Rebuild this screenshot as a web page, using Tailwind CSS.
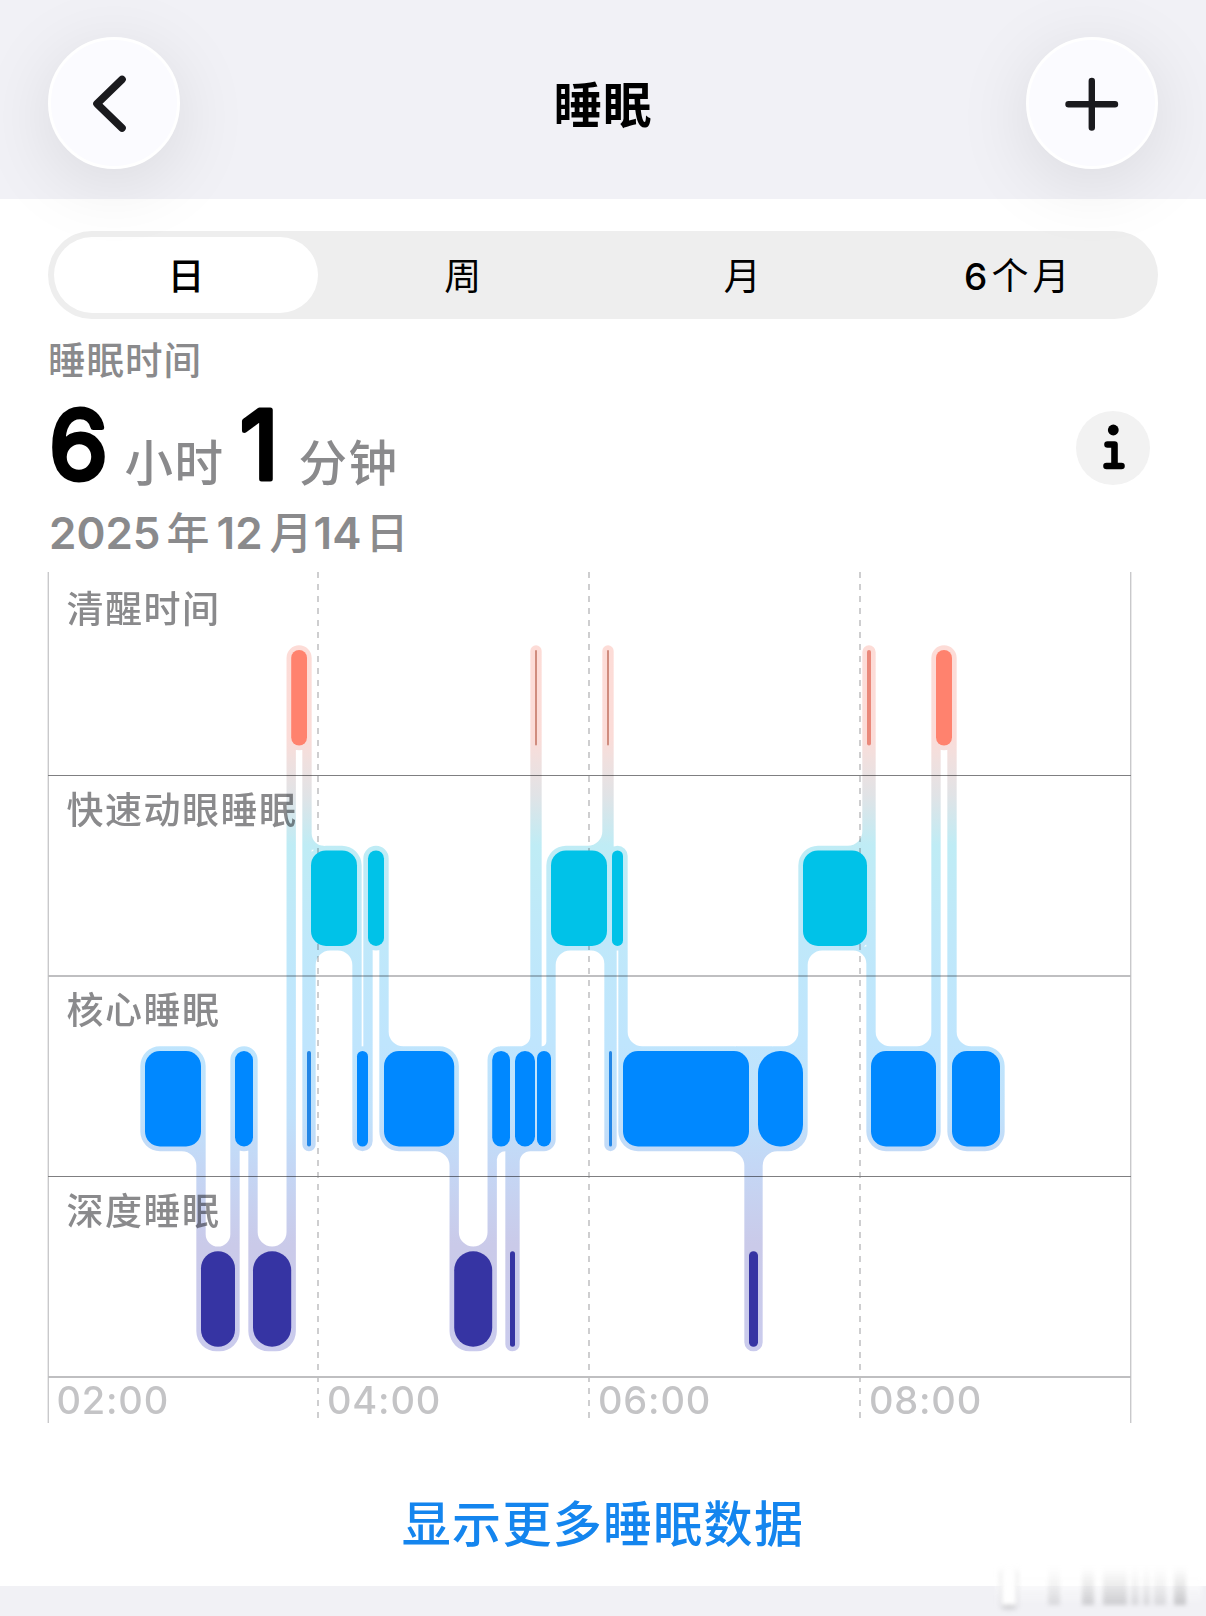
<!doctype html>
<html lang="zh-CN">
  <head>
    <meta charset="UTF-8" />
    <meta name="viewport" content="width=device-width, initial-scale=1.0" />
    <title>睡眠</title>
    <script src="https://cdn.jsdelivr.net/npm/@tailwindcss/browser@4"></script>
  </head>

  <body class="bg-white font-['Inter','Noto_Sans_CJK_SC',sans-serif] text-black">
    <div class="w-[1206px] h-[1616px] flex flex-col overflow-hidden">

      <!-- nav bar -->
      <header class="relative z-10 h-[199px] flex-none bg-[#f1f1f6] px-12 pt-[37px] flex justify-between">
        <button class="size-[132px] rounded-full bg-[#fbfbff] border-3 border-white shadow-[0_14px_76px_rgba(0,0,0,0.1)] flex items-center justify-center" aria-label="返回">
          <svg class="size-[126px]" viewBox="0 0 126 126" fill="none" stroke="#1a1a1e" stroke-width="7.6" stroke-linecap="round" stroke-linejoin="round">
            <path d="M71 39.5 L46 63.7 L71 88" />
          </svg>
        </button>
        <h1 class="h-[132px] pt-1.5 flex items-center text-[48.5px] tracking-[1px] font-bold">睡眠</h1>
        <button class="size-[132px] rounded-full bg-[#fbfbff] border-3 border-white shadow-[0_14px_76px_rgba(0,0,0,0.1)] flex items-center justify-center" aria-label="添加">
          <svg class="size-[126px]" viewBox="0 0 126 126" fill="none" stroke="#1a1a1e" stroke-width="6.4" stroke-linecap="round">
            <path d="M39.5 64.3 H86 M62.8 41 V87.6" />
          </svg>
        </button>
      </header>

      <!-- range picker -->
      <nav class="mx-12 mt-8 h-[88px] flex-none rounded-full bg-[#eeeeee] px-1.5 py-1.5 grid grid-cols-4 text-[37px] text-center">
        <div class="w-[264px] pt-1 rounded-full bg-white flex items-center justify-center font-medium">日</div>
        <div class="pt-1 pr-1.5 flex items-center justify-center">周</div>
        <div class="pt-1 pl-1 flex items-center justify-center">月</div>
        <div class="pt-1 pl-2 flex items-center justify-center tracking-[4px]"><span class="font-medium">6</span>个月</div>
      </nav>

      <!-- summary -->
      <section class="h-[253px] flex-none pl-12 pr-[56px] flex justify-between text-[#8a8a8c] font-medium">
        <div>
          <div class="pt-1 h-[78px] leading-[76px] text-[37.5px] tracking-[1px]">睡眠时间</div>
          <div class="h-[96px] flex items-baseline leading-[96px]">
            <svg class="w-[76.5px] h-[84px] overflow-visible" viewBox="0 0 76.5 84">
              <text x="1" y="81.5" class="text-[95px] font-normal fill-black stroke-black stroke-[5px] [stroke-linejoin:round]">6</text>
            </svg>
            <span class="text-[48.5px] tracking-[1.5px]">小时</span>
            <svg class="w-[74px] h-[84px] overflow-visible" viewBox="0 0 74 84">
              <text x="15" y="81.5" class="text-[95px] font-normal fill-black stroke-black stroke-[5px] [stroke-linejoin:round]">1</text>
            </svg>
            <span class="text-[48.5px] tracking-[1.5px]">分钟</span>
          </div>
          <div class="flex items-baseline pt-[2px] leading-[76px] text-[43px]">
            <span class="ml-[1px] text-[44px] font-semibold">2025</span><span class="ml-[6px]">年</span><span class="ml-[7px] text-[44px] font-semibold">12</span><span class="ml-[7px]">月</span><span class="ml-[1px] text-[44px] font-semibold">14</span><span class="ml-[4px]">日</span>
          </div>
        </div>
        <button class="mt-[92px] size-[74px] rounded-full bg-[#f2f2f2]" aria-label="信息">
          <svg class="size-[74px]" viewBox="0 0 74 74" fill="none" stroke="#000" stroke-width="6.6" stroke-linecap="round" stroke-linejoin="round">
            <circle cx="37.3" cy="19" r="5.4" fill="#000" stroke="none" />
            <path d="M31.5 33.5 H38.5 V55 M30.5 55 H45.5" />
          </svg>
        </button>
      </section>

      <!-- stages chart -->
      <svg class="w-[1206px] h-[852px] flex-none isolate" viewBox="0 572 1206 852">
        <defs>
          <linearGradient id="halo" gradientUnits="userSpaceOnUse" x1="0" y1="640" x2="0" y2="1360">
            <stop offset="0" stop-color="#fddcd7" />
            <stop offset="0.135" stop-color="#fbdcd8" />
            <stop offset="0.17" stop-color="#efe0df" />
            <stop offset="0.215" stop-color="#e1e3e6" />
            <stop offset="0.285" stop-color="#bfecf5" />
            <stop offset="0.42" stop-color="#bfe8fa" />
            <stop offset="0.56" stop-color="#bfe5fd" />
            <stop offset="0.66" stop-color="#c0e1fb" />
            <stop offset="0.73" stop-color="#c4d7f5" />
            <stop offset="0.84" stop-color="#cacae9" />
            <stop offset="1" stop-color="#cacbed" />
          </linearGradient>
        </defs>

        <g stroke="#c9c9cb" stroke-width="1.4">
          <path d="M48.3 572 V1423 M1130.7 572 V1423" />
          <path d="M318 572 V1423 M589 572 V1423 M860 572 V1423" stroke-width="1.8" stroke-dasharray="6 6" />
        </g>
        <g shape-rendering="crispEdges">
          <rect x="48" y="775" width="1083" height="1" fill="#7f7f81" />
          <rect x="48" y="975" width="1083" height="2" fill="#bfbfc1" />
          <rect x="48" y="1176" width="1083" height="1" fill="#7f7f81" />
          <rect x="48" y="1376" width="1083" height="2" fill="#bfbfc1" />
        </g>

        <g class="text-[37px] font-medium fill-[#8a8a8c] tracking-[1.5px]">
          <text x="66.5" y="623">清醒时间</text>
          <text x="66.5" y="823.5">快速动眼睡眠</text>
          <text x="66.5" y="1024">核心睡眠</text>
          <text x="66.5" y="1224.5">深度睡眠</text>
        </g>
        <g class="text-[38px] font-medium fill-[#c4c4c6] tracking-[0.8px]">
          <text x="56.5" y="1414">02:00</text>
          <text x="327" y="1414">04:00</text>
          <text x="598" y="1414">06:00</text>
          <text x="869" y="1414">08:00</text>
        </g>

        <path id="links" class="mix-blend-multiply" fill="url(#halo)" />
        <g id="blocks"></g>
      </svg>

      <a class="mt-[62px] leading-[78px] flex-none text-center text-[49px] tracking-[1.3px] font-medium text-[#1485ee]" href="#">显示更多睡眠数据</a>

      <!-- next section edge -->
      <footer class="mt-auto h-[30px] flex-none bg-[#f1f1f5] flex justify-end pr-1">
        <div class="-mt-[19px] h-[38px] w-[206px] pl-[6px] flex items-stretch blur-[2px] bg-gradient-to-b from-white/0 via-white/60 to-white/0">
          <div class="w-[14px] bg-white shadow-[0_3px_4px_rgba(0,0,0,0.22)]"></div>
          <div class="ml-[32px] w-[12px] bg-gradient-to-b from-black/0 to-black/10"></div>
          <div class="ml-[22px] w-[12px] bg-gradient-to-b from-black/0 to-black/15"></div>
          <div class="ml-[9px] w-[24px] bg-gradient-to-b from-black/0 to-black/15"></div>
          <div class="ml-[4px] w-[8px] bg-gradient-to-b from-black/0 to-black/10"></div>
          <div class="ml-[4px] w-[7px] bg-gradient-to-b from-black/0 to-black/10"></div>
          <div class="ml-[4px] w-[12px] bg-gradient-to-b from-black/0 to-black/10"></div>
          <div class="ml-[8px] w-[12px] bg-gradient-to-b from-black/0 to-black/18"></div>
        </div>
      </footer>
    </div>
  </body>

  <script>
    const tops = { awake: 650, rem: 850.4, core: 1051, deep: 1251.2 }
    const colors = { awake: "#ff826e", rem: "#00c2e8", core: "#0088ff", deep: "#3634a3" }
    const H = 95.5
    const P = 4.67

    // stage, start x, end x, optional colour, optional radius
    const night = [
      ["core", 145, 201], ["deep", 201, 235], ["core", 235, 253], ["deep", 253, 291.2],
      ["awake", 291.2, 307], ["core", 307, 311, "#2386e6"], ["rem", 311, 357], ["core", 357, 368],
      ["rem", 368, 384], ["core", 384, 454.2], ["deep", 454.2, 492.2], ["core", 492.2, 510],
      ["deep", 510, 515], ["core", 515, 535], ["awake", 535, 537, "#d08c7e"], ["core", 537, 551],
      ["rem", 551, 607], ["awake", 607, 609, "#d08c7e"], ["core", 609, 612, "#2386e6"], ["rem", 612, 623],
      ["core", 623, 749], ["deep", 749, 758], ["core", 758, 803, null, 22], ["rem", 803, 867],
      ["awake", 867, 871, "#ea887a"], ["core", 871, 936], ["awake", 936, 952], ["core", 952, 1000],
    ]

    const rect = (x, y, w, h, r) =>
      `M${x + r} ${y}h${w - 2 * r}a${r} ${r} 0 0 1 ${r} ${r}v${h - 2 * r}a${r} ${r} 0 0 1 ${-r} ${r}` +
      `h${2 * r - w}a${r} ${r} 0 0 1 ${-r} ${-r}v${2 * r - h}a${r} ${r} 0 0 1 ${r} ${-r}z`

    // concave corner at x,y that opens towards sx,sy, with a strip that runs back into the block
    const fillet = (x, y, sx, sy, r) => {
      const a = `${x} ${y + sy * r}`
      const b = `${x + sx * r} ${y}`
      const oa = `${x - sx} ${y + sy * r}`
      const o = `${x - sx} ${y - sy * 4}`
      const ob = `${x + sx * r} ${y - sy * 4}`
      return sx * sy > 0
        ? `M${o}L${ob}L${b}A${r} ${r} 0 0 0 ${a}L${oa}z`
        : `M${o}L${oa}L${a}A${r} ${r} 0 0 0 ${b}L${ob}z`
    }

    let d = ""
    let blocks = ""
    night.forEach(([stage, x0, x1, color, radius], i) => {
      const y = tops[stage]
      const w = x1 - x0
      const r = radius || (w < 40 ? w / 2 : 15)
      blocks += `<rect x="${x0}" y="${y}" width="${w}" height="${H}" rx="${r}" fill="${color || colors[stage]}"/>`
      d += rect(x0 - P, y - P, w + 2 * P, H + 2 * P, Math.min(20, r + P))

      const prev = night[i - 1]
      const next = night[i + 1]
      const dirPrev = prev ? Math.sign(tops[prev[0]] - y) : 0
      const dirNext = next ? Math.sign(tops[next[0]] - y) : 0
      const edge = (dir) => (dir > 0 ? y + H + P : y - P)
      const size = dirPrev === dirNext ? (w - 2 * P) / 2 : w - 2 * P
      const fr = Math.min(14.5, size)
      if (fr > 5) {
        if (prev) d += fillet(x0 + P, edge(dirPrev), 1, dirPrev, fr)
        if (next) d += fillet(x1 - P, edge(dirNext), -1, dirNext, fr)
      }
      if (next) {
        const top = Math.min(y, tops[next[0]]) + H / 2
        const bottom = Math.max(y, tops[next[0]]) + H / 2
        d += rect(x1 - P, top, 2 * P, bottom - top, 0)
      }
    })

    // corners and seams where a link passes beside a block it does not join
    d += fillet(311.7, 845.7, 1, -1, 12)
    d += fillet(604.3, 950.6, -1, 1, 13)
    d += fillet(866.3, 950.6, -1, 1, 13)
    d += fillet(496.8, 1151.2, 1, 1, 8.5)
    d += fillet(546.3, 1046.3, -1, -1, 4.5)
    d += rect(500, 1046.3, 25, 40, 0)
    d += rect(526, 1110, 18, 41.2, 0)
    d += rect(736, 1046.3, 36, 40, 0)

    document.getElementById("links").setAttribute("d", d)
    document.getElementById("blocks").innerHTML = blocks
  </script>
</html>
